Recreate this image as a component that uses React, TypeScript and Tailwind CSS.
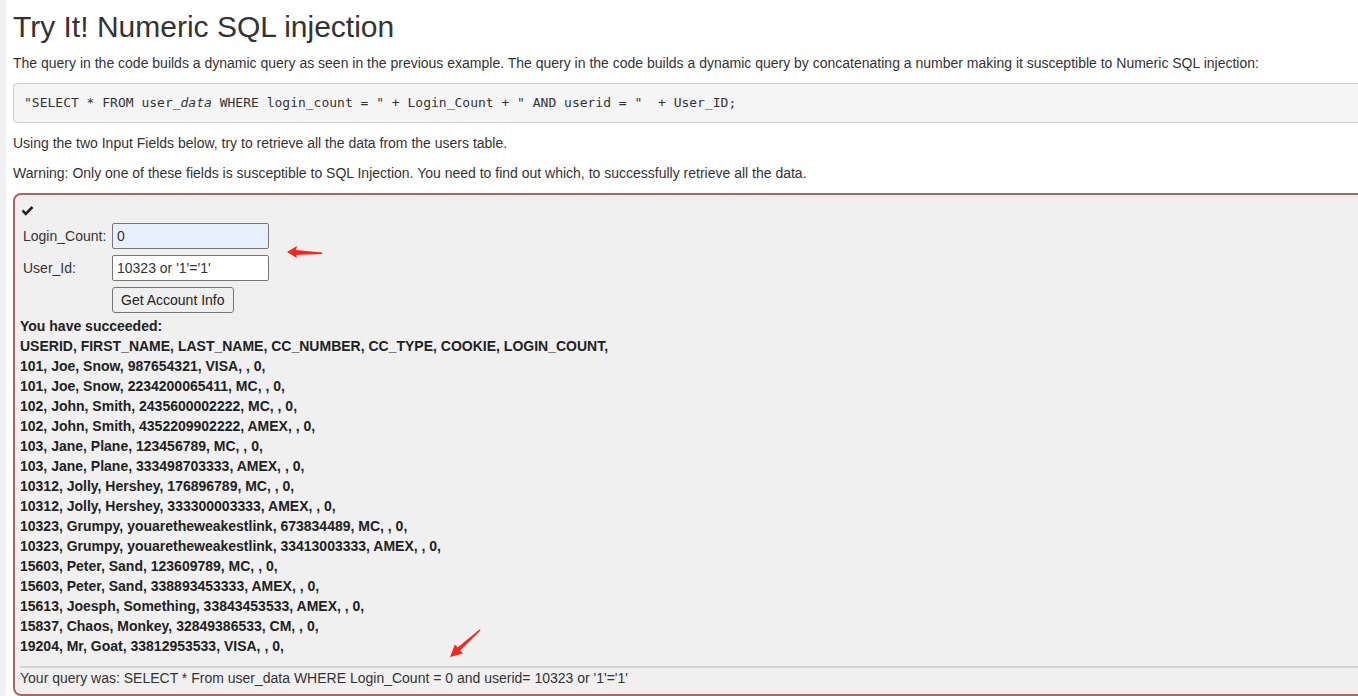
import React from "react";

const rows = [
  "USERID, FIRST_NAME, LAST_NAME, CC_NUMBER, CC_TYPE, COOKIE, LOGIN_COUNT,",
  "101, Joe, Snow, 987654321, VISA, , 0,",
  "101, Joe, Snow, 2234200065411, MC, , 0,",
  "102, John, Smith, 2435600002222, MC, , 0,",
  "102, John, Smith, 4352209902222, AMEX, , 0,",
  "103, Jane, Plane, 123456789, MC, , 0,",
  "103, Jane, Plane, 333498703333, AMEX, , 0,",
  "10312, Jolly, Hershey, 176896789, MC, , 0,",
  "10312, Jolly, Hershey, 333300003333, AMEX, , 0,",
  "10323, Grumpy, youaretheweakestlink, 673834489, MC, , 0,",
  "10323, Grumpy, youaretheweakestlink, 33413003333, AMEX, , 0,",
  "15603, Peter, Sand, 123609789, MC, , 0,",
  "15603, Peter, Sand, 338893453333, AMEX, , 0,",
  "15613, Joesph, Something, 33843453533, AMEX, , 0,",
  "15837, Chaos, Monkey, 32849386533, CM, , 0,",
  "19204, Mr, Goat, 33812953533, VISA, , 0,",
];

const App = () => {
  return (
    <div className="relative flex h-[696px] w-full overflow-hidden bg-white font-['Liberation_Sans',Arial,sans-serif] text-[14px] leading-[20px] text-[#333]">
      <div className="w-[6px] shrink-0 bg-[#f1f1f5]" />
      <div className="w-[1420px] shrink-0 pl-[7px]">
        <h1 className="mt-[10px] text-[30px] leading-[33px] font-normal">
          Try It! Numeric SQL injection
        </h1>
        <p className="mt-[10px]">
          The query in the code builds a dynamic query as seen in the previous example. The query in the code builds a dynamic query by concatenating a number making it susceptible to Numeric SQL injection:
        </p>
        <pre className="mt-[10px] rounded-[4px] border border-[#ccc] bg-[#f5f5f5] px-[10px] py-[10px] font-['DejaVu_Sans_Mono',monospace] text-[13px] leading-[18px] text-[#333]">
          "SELECT * FROM user_<i>data</i> WHERE login_count = " + Login_Count + " AND userid = "  + User_ID;
        </pre>
        <p className="mt-[10px]">
          Using the two Input Fields below, try to retrieve all the data from the users table.
        </p>
        <p className="mt-[10px]">
          Warning: Only one of these fields is susceptible to SQL Injection. You need to find out which, to successfully retrieve all the data.
        </p>

        <div className="mt-[10px] rounded-[8px] border-2 border-[#b06464] bg-[#f0f0f0] px-[5px] pt-[8px] pb-[6px]">
          <div className="flex h-[14px] items-center pl-[1px]">
            <svg width="13" height="11" viewBox="0 0 13 11">
              <path d="M1.5 5.5 L4.8 8.8 L11.5 2" fill="none" stroke="#222" strokeWidth="2.6" />
            </svg>
          </div>

          <div className="mt-[6px] flex flex-col gap-[6px] pl-[3px]">
            <div className="flex items-center">
              <label className="w-[89px]">Login_Count:</label>
              <input
                className="h-[26px] w-[157px] rounded-[2px] border border-[#767676] bg-[#e8f0fe] pl-[4px] text-[14px] outline-none"
                defaultValue="0"
              />
            </div>
            <div className="flex items-center">
              <label className="w-[89px]">User_Id:</label>
              <input
                className="h-[26px] w-[157px] rounded-[2px] border border-[#767676] bg-white pl-[4px] text-[14px] outline-none"
                defaultValue="10323 or '1'='1'"
              />
            </div>
            <div className="flex items-center">
              <div className="w-[89px]" />
              <button className="h-[26px] rounded-[3px] border border-[#767676] bg-[#efefef] px-[8px] text-[14px] text-[#222]">
                Get Account Info
              </button>
            </div>
          </div>

          <div className="mt-[3px] font-bold text-[#222]">
            <p>You have succeeded:</p>
            {rows.map((r, i) => (
              <p key={i}>{r}</p>
            ))}
          </div>

          <div className="mt-[10px] border-t-2 border-[#d2d2d2]" />
          <p className="text-[#333]">
            Your query was: SELECT * From user_data WHERE Login_Count = 0 and userid= 10323 or '1'='1'
          </p>
        </div>
      </div>

      {/* red arrows from the screenshot */}
      <svg className="absolute left-[286px] top-[245px]" width="38" height="14" viewBox="0 0 38 14">
        <polygon points="1,7 11,1 10,5 36,7.5 36,9 10,10 11,13" fill="#ff2418" />
      </svg>
      <svg className="absolute left-[448px] top-[628px]" width="36" height="32" viewBox="0 0 36 32">
        <polygon points="2,29 6.9,16.6 9.6,19.5 31.5,1.4 32.5,2.6 12.2,22.5 14.9,25.4" fill="#ff2418" />
      </svg>
    </div>
  );
};

export default App;
